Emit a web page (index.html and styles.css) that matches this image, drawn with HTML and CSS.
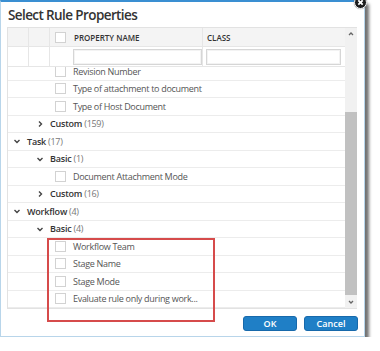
FILE: index.html
```html
<!DOCTYPE html>
<html lang="en">
<head>
    <meta charset="UTF-8">
    <meta name="viewport" content="width=device-width, initial-scale=1.0">
    <title>Select Rule Properties</title>
    <link rel="stylesheet" href="styles.css">
</head>
<body>

    <div class="dialog">

        <!-- Close button on the corner -->
        <span class="close-btn">
            <svg viewBox="0 0 10 10"><path d="M3 3 L7 7 M7 3 L3 7"/></svg>
        </span>

        <h1 class="dialog-title">Select Rule Properties</h1>

        <div class="grid">
            <div class="grid-main">

                <!-- Column headers -->
                <div class="grid-head">
                    <div class="cell cell-line"></div>
                    <div class="cell cell-line"></div>
                    <div class="cell cell-check"><span class="cb"></span></div>
                    <div class="cell cell-name cell-line">PROPERTY NAME</div>
                    <div class="cell cell-name">CLASS</div>
                </div>

                <!-- Filter row -->
                <div class="grid-filter">
                    <div class="cell cell-line"></div>
                    <div class="cell cell-line"></div>
                    <div class="cell"></div>
                    <div class="cell cell-line"><input type="text" class="filter-input"></div>
                    <div class="cell"><input type="text" class="filter-input filter-class"></div>
                </div>

                <!-- Tree of properties (first row is scrolled half out of view) -->
                <div class="grid-body">
                    <div class="row l2 partial"><span class="cb"></span>Revision Number</div>
                    <div class="row l2"><span class="cb"></span>Type of attachment to document</div>
                    <div class="row l2"><span class="cb"></span>Type of Host Document</div>
                    <div class="row l1">
                        <svg class="chev" viewBox="0 0 8 8"><path d="M3 1.5 L5.5 4 L3 6.5"/></svg>
                        <b class="group">Custom</b>&nbsp;<span class="count">(159)</span>
                    </div>
                    <div class="row l0">
                        <svg class="chev" viewBox="0 0 8 8"><path d="M1.5 3 L4 5.5 L6.5 3"/></svg>
                        <b class="group">Task</b>&nbsp;<span class="count">(17)</span>
                    </div>
                    <div class="row l1">
                        <svg class="chev" viewBox="0 0 8 8"><path d="M1.5 3 L4 5.5 L6.5 3"/></svg>
                        <b class="group">Basic</b>&nbsp;<span class="count">(1)</span>
                    </div>
                    <div class="row l2"><span class="cb"></span>Document Attachment Mode</div>
                    <div class="row l1">
                        <svg class="chev" viewBox="0 0 8 8"><path d="M3 1.5 L5.5 4 L3 6.5"/></svg>
                        <b class="group">Custom</b>&nbsp;<span class="count">(16)</span>
                    </div>
                    <div class="row l0">
                        <svg class="chev" viewBox="0 0 8 8"><path d="M1.5 3 L4 5.5 L6.5 3"/></svg>
                        <b class="group">Workflow</b>&nbsp;<span class="count">(4)</span>
                    </div>
                    <div class="row l1">
                        <svg class="chev" viewBox="0 0 8 8"><path d="M1.5 3 L4 5.5 L6.5 3"/></svg>
                        <b class="group">Basic</b>&nbsp;<span class="count">(4)</span>
                    </div>
                    <div class="row l2"><span class="cb"></span>Workflow Team</div>
                    <div class="row l2"><span class="cb"></span>Stage Name</div>
                    <div class="row l2"><span class="cb"></span>Stage Mode</div>
                    <div class="row l2"><span class="cb"></span>Evaluate rule only during work...</div>
                </div>
            </div>

            <!-- Vertical scrollbar -->
            <div class="scrollbar">
                <div class="scroll-arrow">
                    <svg viewBox="0 0 8 8"><path d="M2 5 L4 3 L6 5"/></svg>
                </div>
                <div class="scroll-track"><div class="scroll-thumb"></div></div>
                <div class="scroll-arrow">
                    <svg viewBox="0 0 8 8"><path d="M2 3 L4 5 L6 3"/></svg>
                </div>
            </div>
        </div>

        <div class="dialog-footer">
            <button class="btn">OK</button>
            <button class="btn">Cancel</button>
        </div>

        <!-- Red callout around the workflow fields -->
        <div class="highlight"></div>
    </div>

</body>
</html>
```

FILE: styles.css
```css
* {
    box-sizing: border-box;
}

body {
    margin: 0;
    font-family: "Open Sans", Arial, sans-serif;
    background-color: #fff;
    overflow: hidden;
}

.dialog {
    position: relative;
    width: 365px;
    height: 337px;
    background-color: #fff;
    border: 1px solid #b8d5ea;
    border-top: 2px solid #3a8fd2;
    box-shadow: 4px 4px 3px rgba(0, 0, 0, 0.55);
    padding: 0 7px 0 6px;
}

.close-btn {
    position: absolute;
    top: -6px;
    right: -3px;
    width: 13px;
    height: 13px;
    border-radius: 50%;
    background-color: #1c1c1c;
    border: 1.5px solid #fff;
    box-shadow: 0 0 1px #555;
    display: flex;
}

.close-btn svg {
    width: 100%;
    height: 100%;
    stroke: #fff;
    stroke-width: 1.6;
}

.dialog-title {
    margin: 0;
    padding: 1px 0 0 1px;
    height: 25px;
    line-height: 24px;
    font-size: 13.5px;
    font-weight: 600;
    color: #333;
    letter-spacing: -0.6px;
}

.grid {
    display: flex;
    height: 282px;
    border: 1px solid #e2e2e2;
    border-right: none;
}

.grid-main {
    flex: 1;
    min-width: 0;
    display: flex;
    flex-direction: column;
}

.grid-head,
.grid-filter {
    display: grid;
    grid-template-columns: 21px 21px 20px 133px 1fr;
    border-bottom: 1px solid #e6e6e6;
}

.grid-head {
    height: 19px;
    background-color: #f4f4f4;
}

.grid-filter {
    height: 20px;
}

.cell {
    display: flex;
    align-items: center;
    min-width: 0;
}

.cell-line {
    border-right: 1px solid #e6e6e6;
}

.cell-check {
    justify-content: center;
}

.cell-name {
    padding-left: 4px;
    font-size: 8px;
    font-weight: 600;
    color: #333;
}

.filter-input {
    width: 129px;
    height: 16px;
    margin-left: 3px;
    border: 1px solid #d6d6d6;
    box-shadow: inset 0 0 0 1px #f3f3f3;
    padding: 0 3px;
    font: 9px "Open Sans", Arial, sans-serif;
}

.filter-class {
    width: 135px;
}

.grid-body {
    flex: 1;
}

.row {
    display: flex;
    align-items: center;
    height: 17.5px;
    border-bottom: 1px solid #ececec;
    font-size: 9px;
    line-height: 9px;
    color: #555;
    letter-spacing: -0.3px;
    white-space: nowrap;
}

/* row scrolled partly under the filter row: its checkbox shows only the lower part */
.row.partial {
    height: 13.5px;
    align-items: flex-start;
}

.row.partial .cb {
    height: 9.5px;
    border-top: none;
}

.row.l0 {
    padding-left: 5px;
}

.row.l1 {
    padding-left: 28px;
}

.row.l2 {
    padding-left: 47px;
}

.chev {
    flex: none;
    width: 8px;
    height: 8px;
    margin-right: 6px;
    fill: none;
    stroke: #444;
    stroke-width: 1.4;
}

.group {
    font-weight: 600;
    color: #333;
    letter-spacing: -0.2px;
}

.count {
    color: #777;
}

.cb {
    flex: none;
    width: 11px;
    height: 11px;
    border: 1px solid #d2d2d2;
    background-color: #fff;
    margin-right: 7px;
}

.cell-check .cb {
    margin-right: 0;
}

.scrollbar {
    width: 12px;
    display: flex;
    flex-direction: column;
    background-color: #f1f1f1;
}

.scroll-arrow {
    height: 12px;
    display: flex;
    align-items: center;
    justify-content: center;
}

.scroll-arrow svg {
    width: 8px;
    height: 8px;
    fill: none;
    stroke: #666;
    stroke-width: 1.3;
}

.scroll-track {
    flex: 1;
}

.scroll-thumb {
    margin: 72px 0 0 0;
    height: 183px;
    background-color: #c1c1c1;
}

.dialog-footer {
    display: flex;
    justify-content: flex-end;
    gap: 7px;
    padding-top: 7px;
    margin-right: -1px;
}

.btn {
    width: 54px;
    height: 15px;
    padding: 0;
    border: 1px solid #1769ab;
    border-radius: 3px;
    background-color: #1f7fc6;
    color: #fff;
    font: 600 9px "Open Sans", Arial, sans-serif;
    cursor: pointer;
}

.highlight {
    position: absolute;
    left: 46px;
    top: 235.5px;
    width: 168px;
    height: 84.5px;
    border: 2px solid #d64b4b;
}
```
